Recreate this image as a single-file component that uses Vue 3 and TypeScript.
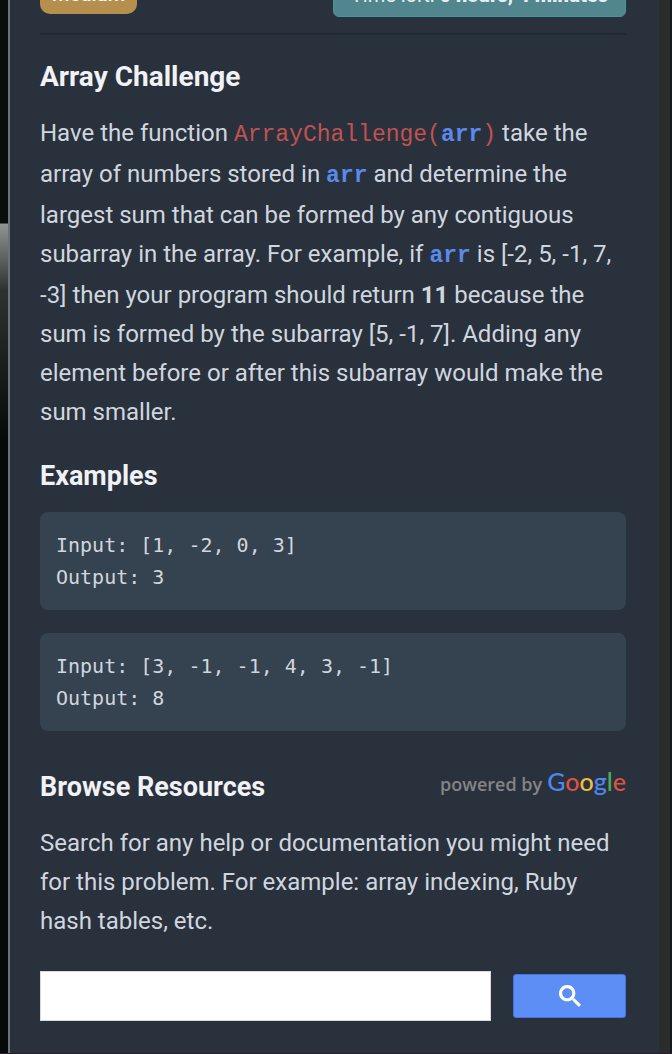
<script setup lang="ts">
import { ref } from 'vue'

interface Example {
  input: string
  output: string
}

const examples: Example[] = [
  { input: '[1, -2, 0, 3]', output: '3' },
  { input: '[3, -1, -1, 4, 3, -1]', output: '8' },
]

const query = ref('')
</script>

<template>
  <div class="screen">
    <main class="panel">
      <header class="status">
        <span class="level">medium</span>
        <span class="timer">Time left: <b>0 hours, 4 minutes</b></span>
      </header>

      <section class="challenge">
        <h1 class="title main-title">Array Challenge</h1>
        <p class="text">
          Have the function <code class="fn">ArrayChallenge(<b class="arg">arr</b>)</code> take the
          array of numbers stored in <code class="arg">arr</code> and determine the largest sum that
          can be formed by any contiguous subarray in the array. For example, if
          <code class="arg">arr</code> is [-2, 5, -1, 7, -3] then your program should return
          <b>11</b> because the sum is formed by the subarray [5, -1, 7]. Adding any element before
          or after this subarray would make the sum smaller.
        </p>
      </section>

      <section class="examples">
        <h2 class="title">Examples</h2>
        <pre v-for="(ex, i) in examples" :key="i" class="example">Input: {{ ex.input }}
Output: {{ ex.output }}</pre>
      </section>

      <section class="resources">
        <div class="resources-head">
          <h2 class="title">Browse Resources</h2>
          <div class="powered">
            <span>powered by</span>
            <span class="google"><span class="blue">G</span><span class="red">o</span><span class="yellow">o</span><span class="blue">g</span><span class="green">l</span><span class="red">e</span></span>
          </div>
        </div>
        <p class="text">
          Search for any help or documentation you might need for this problem. For example: array
          indexing, Ruby hash tables, etc.
        </p>
        <form class="search" @submit.prevent>
          <input v-model="query" class="field" type="text" aria-label="Search resources" />
          <button class="go" type="submit" aria-label="Search">
            <svg viewBox="0 0 13 13" width="22" height="22" aria-hidden="true">
              <path
                fill="#fff"
                d="m4.8495 7.8226c0.82666 0 1.5262-0.29146 2.0985-0.87438 0.57232-0.58292 0.86378-1.2877 0.87438-2.1144 0.010599-0.82666-0.28086-1.5262-0.87438-2.0985-0.59352-0.57232-1.293-0.86378-2.0985-0.87438-0.8055-0.010599-1.5103 0.28086-2.1144 0.87438-0.60414 0.59352-0.8956 1.293-0.87438 2.0985 0.021197 0.8055 0.31266 1.5103 0.87438 2.1144 0.56172 0.60414 1.2665 0.8956 2.1144 0.87438zm4.4695 0.2115 3.681 3.6819-1.259 1.284-3.6817-3.7 0.0019784-0.69479-0.090043-0.098846c-0.87973 0.76087-1.92 1.1413-3.1207 1.1413-1.3553 0-2.5025-0.46363-3.4417-1.3909s-1.4088-2.0686-1.4088-3.4239c0-1.3553 0.4696-2.4966 1.4088-3.4239 0.9392-0.92727 2.0864-1.3969 3.4417-1.4088 1.3553-0.011889 2.4906 0.45771 3.406 1.4088 0.9154 0.95107 1.379 2.0924 1.3909 3.4239 0 1.2126-0.38043 2.2588-1.1413 3.1385l0.098834 0.090049z"
              />
            </svg>
          </button>
        </form>
      </section>
    </main>
    <div class="scrollbar"></div>
  </div>
</template>

<style>
body {
  margin: 0;
  background: #29313c;
}
</style>

<style scoped>
.screen {
  display: flex;
  min-height: 100vh;
  box-sizing: border-box;
  overflow: hidden;
  padding-left: 8px;
  border-bottom: 1px solid #2b1d2b;
  background: linear-gradient(#0b0c0e 0 223px, #929394 224px, #303133 290px, #08090a 440px, #08090a);
  font-family: Roboto, 'Liberation Sans', sans-serif;
  color: #d0d6df;
}

.panel {
  flex: 1;
  min-width: 0;
  padding: 0 33px 32px 30px;
  border-left: 2px solid #6c737d;
  background: #29313c;
}

.scrollbar {
  width: 13px;
  flex: none;
  box-sizing: border-box;
  border-right: 2px solid #17191a;
  background: #2a2b2b;
}

.status {
  display: flex;
  justify-content: space-between;
  align-items: flex-start;
  margin-top: -24px;
  padding-bottom: 16px;
  border-bottom: 2px solid #212a34;
}

.level {
  padding: 4px 12px 6px;
  border-radius: 10px;
  background: #b68f4f;
  color: #fff;
  font-size: 20px;
  line-height: 28px;
  font-weight: 500;
}

.timer {
  padding: 4px 17px 7px;
  border: 1px solid #48959b;
  border-radius: 6px;
  background: #51868f;
  color: #e8edf2;
  font-size: 20px;
  line-height: 28px;
}

.timer b {
  font-weight: 900;
}

.title {
  margin: 0;
  font-size: 27px;
  line-height: 36px;
  font-weight: 700;
  color: #f0f2f5;
}

.main-title {
  font-size: 28px;
}

.challenge {
  padding-top: 24px;
}

.text {
  margin: 19px 0 0;
  font-size: 24px;
  line-height: 39px;
}

.fn,
.arg {
  font-family: 'Liberation Mono', monospace;
  font-size: 23px;
}

.fn {
  color: #c25252;
}

.arg {
  color: #5c8aeb;
  font-weight: 700;
}

.examples {
  padding-top: 26px;
}

.example {
  margin: 18px 0 0;
  padding: 17px 16px;
  border-radius: 8px;
  background: #35424f;
  font-family: 'DejaVu Sans Mono', monospace;
  font-size: 20px;
  line-height: 32px;
}

.example + .example {
  margin-top: 23px;
}

.resources {
  padding-top: 38px;
}

.resources-head {
  display: flex;
  justify-content: space-between;
  align-items: flex-start;
}

.powered {
  display: flex;
  align-items: baseline;
  gap: 5px;
  color: #858585;
  font-family: 'Open Sans', sans-serif;
  font-size: 18px;
  line-height: 24px;
  font-weight: 600;
}

.google {
  font-family: Lato, sans-serif;
  font-size: 25px;
  font-weight: 500;
}

.blue {
  color: #4c86f0;
}

.red {
  color: #df5142;
}

.yellow {
  color: #f2bd42;
}

.green {
  color: #4ea95c;
}

.search {
  display: flex;
  align-items: center;
  gap: 22px;
  margin-top: 30px;
}

.field {
  flex: 1;
  min-width: 0;
  height: 50px;
  box-sizing: border-box;
  padding: 0 12px;
  border: 1px solid #d9d9d9;
  border-radius: 0;
  background: #fff;
  font-family: inherit;
  font-size: 24px;
  color: #222;
}

.go {
  display: flex;
  align-items: center;
  justify-content: center;
  width: 113px;
  height: 44px;
  padding: 0;
  border: 1px solid #4474e0;
  border-radius: 3px;
  background: #5d8ef5;
  cursor: pointer;
}
</style>
